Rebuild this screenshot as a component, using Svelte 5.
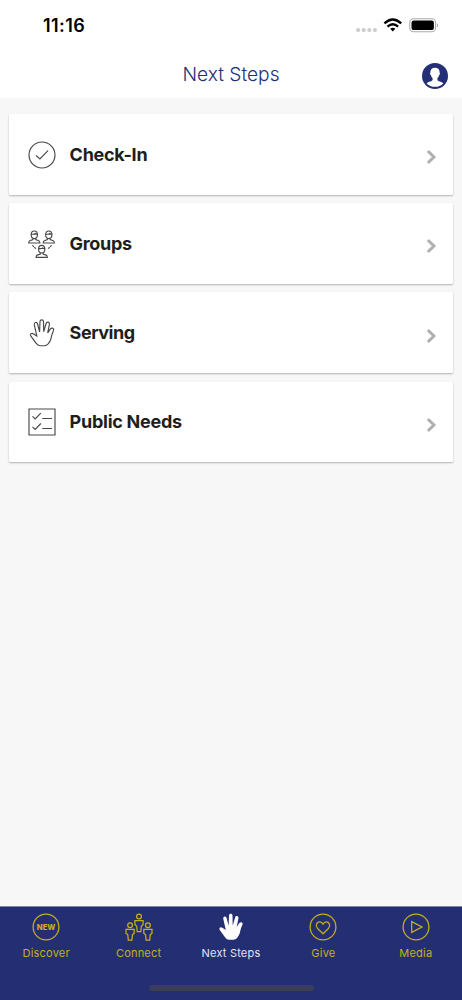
<script>
  const items = [
    { label: 'Check-In', icon: 'check', width: 78 },
    { label: 'Groups', icon: 'groups', width: 62.5 },
    { label: 'Serving', icon: 'hand', width: 65.5 },
    { label: 'Public Needs', icon: 'list', width: 112.5 }
  ];
  const tabs = [
    { label: 'Discover', icon: 'new' },
    { label: 'Connect', icon: 'connect' },
    { label: 'Next Steps', icon: 'handfill', active: true },
    { label: 'Give', icon: 'heart' },
    { label: 'Media', icon: 'play' }
  ];
  const hand = 'M8.2 24.4 L2.9 17.2 C1.5 14.9 3.5 13.5 5.7 14.9 L8.8 16.9 L6.3 5.9 C5.9 3.1 8.9 2.6 9.6 5 L11.6 12.9 L12 2.6 C12.1.2 15.3.2 15.5 2.6 L15.7 12.7 L18.1 4.5 C18.9 2.2 21.8 2.9 21.4 5.4 L19.7 13.9 L22.3 10.1 C24 8.2 26.5 9.4 25.4 11.8 C24 14.8 23.4 17.4 22.8 20.1 Q22.2 22.6 20.1 24.9 Q18.4 26.6 16.5 26.7 H12.3 C10.4 26.6 9.3 25.9 8.2 24.4Z';
</script>

{#snippet bust(x, y)}
  <g transform="translate({x} {y})">
    <ellipse cx="6" cy="4" rx="3.1" ry="3.8" />
    <path d="M2.5 3.4H4Q6 3.7 7 2.7Q7.8 3.5 9.5 3.4M4.6 7.4V8.8L1.5 9.9Q.5 10.3.4 12.2H11.6Q11.5 10.3 10.5 9.9L7.4 8.8V7.4" />
  </g>
{/snippet}

{#snippet person(x, y)}
  <g transform="translate({x} {y})">
    <circle cx="5" cy="3" r="2.4" />
    <path d="M.9 7.2H9.1V11L7.3 12.7L6.8 18H3.2L2.7 12.7L.9 11Z" />
  </g>
{/snippet}

{#snippet icon(name)}
  <svg class="icon" width="28" height="28" viewBox="0 0 28 28" aria-hidden="true">
    {#if name === 'check'}
      <circle cx="14" cy="14" r="13" />
      <path d="M8.1 14.5L11.9 18L20 9.6" />
    {:else if name === 'groups'}
      {@render bust(0.3, 0.8)}
      {@render bust(14.8, 0.8)}
      {@render bust(7.7, 15.2)}
      <path d="M4.4 15.4L8.4 19.2M23.6 15.4L19.6 19.2" stroke-dasharray="2 .7" />
    {:else if name === 'hand'}
      <path d={hand} />
    {:else if name === 'list'}
      <path d="M1 1H27V27H1ZM4.5 8.4L7.2 11L12.8 5.1M4.5 18.8L7.2 21.4L12.8 15.5M14.3 10.5H24M14.3 20.5H24" />
    {:else if name === 'new'}
      <circle cx="14" cy="14" r="12.9" />
      <text x="4.8" y="16.8" textLength="18.6" lengthAdjust="spacingAndGlyphs">NEW</text>
    {:else if name === 'connect'}
      {@render person(9, 0.5)}
      {@render person(0.1, 9.2)}
      {@render person(17.9, 9.2)}
    {:else if name === 'handfill'}
      <path class="fill" d={hand} />
    {:else if name === 'heart'}
      <circle cx="14" cy="14" r="12.9" />
      <path d="M14 20.8L8.6 15.5C5.8 12.5 8 8.7 10.8 8.9Q12.8 9 14 11.1Q15.2 9 17.2 8.9C20 8.7 22.2 12.5 19.4 15.5Z" />
    {:else}
      <circle cx="14" cy="14" r="12.9" />
      <path d="M9.7 8.6L20 14L9.7 19.4Z" />
    {/if}
  </svg>
{/snippet}

<div class="screen">
  <div class="status">
    <span class="time">11:16</span>
    <svg class="signals" width="84" height="20" viewBox="0 0 84 20" aria-hidden="true">
      <g fill="#cdcdcd"><circle cx="3.1" cy="14.1" r="2.1" /><circle cx="8.7" cy="14.1" r="2.1" /><circle cx="14.3" cy="14.1" r="2.1" /><circle cx="19.9" cy="14.1" r="2.1" /></g>
      <g fill="none" stroke="#000" stroke-width="2.4"><path d="M29.4 7.4Q37.8-.4 46.2 7.4" /><path d="M32.5 10.6Q37.8 6 43.1 10.6" /></g>
      <path d="M35.2 12.7Q37.8 10.6 40.4 12.7L37.8 15.4Z" />
      <rect x="54.8" y="2.8" width="25.8" height="13" rx="3.8" fill="none" stroke="#aaa" stroke-width="1.1" />
      <rect x="56.5" y="4.5" width="22.4" height="9.6" rx="2.2" />
      <path d="M82 7.2Q84 9.3 82 11.4Z" fill="#999" />
    </svg>
  </div>
  <header>
    <h1>Next Steps</h1>
    <svg class="profile" width="26" height="26" viewBox="0 0 26 26" aria-label="Profile">
      <circle cx="13" cy="13" r="13" fill="#242f77" />
      <path fill="#fff" d="M13 4.7C9.9 4.7 8.3 6.7 8.4 9.4C7.8 9.5 8 11.7 8.8 12Q9.3 14.1 10.6 15.2V17.1Q10.3 18 7.5 18.8Q5.2 19.4 4.7 20.4Q8 23.8 13 23.8Q18 23.8 21.3 20.4Q20.8 19.4 18.5 18.8Q15.7 18 15.4 17.1V15.2Q16.7 14.1 17.2 12C18 11.7 18.2 9.5 17.6 9.4C17.7 6.7 16.1 4.7 13 4.7Z" />
    </svg>
  </header>
  <main>
    {#each items as item}
      <div class="card">
        {@render icon(item.icon)}
        <svg class="label" width="140" height="28" role="presentation"><text x="0.6" y="19.5" textLength={item.width}>{item.label}</text></svg>
        <svg class="chevron" width="10" height="14" viewBox="0 0 10 14" aria-hidden="true"><path d="M1.7 1.9L7 7L1.7 12.1" /></svg>
      </div>
    {/each}
  </main>
  <nav>
    <div class="tabs">
      {#each tabs as tab}
        <div class="tab" class:active={tab.active}>
          {@render icon(tab.icon)}
          <span>{tab.label}</span>
        </div>
      {/each}
    </div>
    <div class="home"></div>
  </nav>
</div>

<style>
  :global(body) { margin: 0; }
  .screen { width: 462px; height: 1000px; display: flex; flex-direction: column; background: #f7f7f7; font-family: Inter, "Liberation Sans", sans-serif; overflow: hidden; }
  .status { height: 52px; flex: none; background: #fff; display: flex; justify-content: space-between; box-sizing: border-box; padding: 15px 23px 0 43px; }
  .time { font-size: 18px; line-height: 22px; font-weight: 600; letter-spacing: .4px; }
  .signals { margin: 1px 0 0; overflow: visible; }
  header { height: 46px; flex: none; background: #fff; display: grid; grid-template-columns: 1fr auto 1fr; }
  h1 { grid-column: 2; margin: 10px 0 0; font-size: 19.2px; line-height: 24px; font-weight: 300; color: #242f77; }
  .profile { justify-self: end; margin: 11px 14px 0 0; }
  main { flex: 1; display: flex; flex-direction: column; gap: 8.6px; padding: 16px 9px 0; }
  .card { height: 80.6px; flex: none; box-sizing: border-box; background: #fff; border-radius: 1.5px; box-shadow: 0 1px 2px rgba(0, 0, 0, .28); display: flex; align-items: center; padding: 1px 16px 0 19px; }
  .icon { display: block; flex: none; fill: none; stroke: #48484a; stroke-width: 1.15; overflow: visible; }
  .label { margin-left: 13.3px; overflow: visible; }
  .label text { font-size: 18px; font-weight: 700; fill: #1e1e20; }
  .chevron { margin: 5px 0 0 auto; fill: none; stroke: #b0b0b0; stroke-width: 2.9; stroke-linecap: round; }
  nav { height: 94px; flex: none; box-sizing: border-box; background: #242f73; border-top: 1px solid #7f86aa; display: flex; flex-direction: column; justify-content: space-between; align-items: center; padding-bottom: 9px; }
  .tabs { width: 100%; display: grid; grid-template-columns: repeat(5, 1fr); }
  .tab { display: flex; flex-direction: column; align-items: center; color: #c9ad19; padding-top: 6px; }
  .tab .icon { stroke: #c9ad19; stroke-width: 1.25; }
  .tab .icon text { fill: #c9ad19; stroke: none; font-size: 8px; font-weight: 800; }
  .tab .icon .fill { fill: #fff; stroke: none; }
  .tab span { margin-top: 5px; font-size: 11px; line-height: 15px; letter-spacing: .2px; white-space: nowrap; }
  .tab.active { color: #e4e5ee; }
  .home { width: 165px; height: 6px; border-radius: 3px; background: #3c3d59; }
</style>
